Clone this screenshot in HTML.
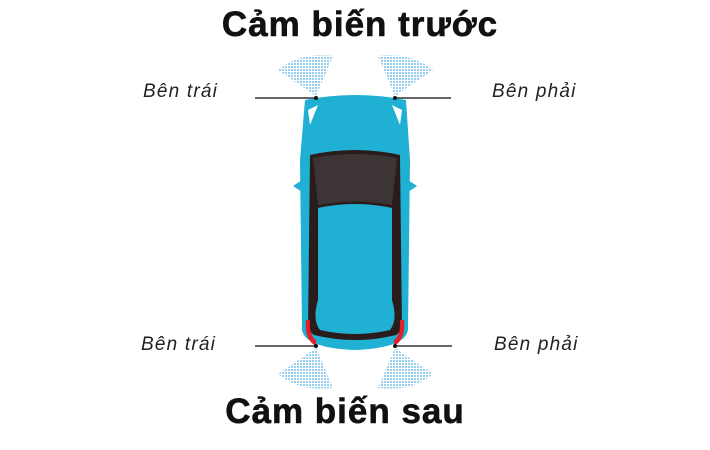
<!DOCTYPE html>
<html><head><style>
body{margin:0;width:710px;height:450px;background:#fff;position:relative;overflow:hidden;font-family:"Liberation Sans",sans-serif}
.t{position:absolute;left:0;width:710px;text-align:center;font-weight:bold;font-size:35px;letter-spacing:1px;color:#111;-webkit-text-stroke:0.6px #111}
.l{position:absolute;font-style:italic;font-size:19px;letter-spacing:1.2px;color:#222}
</style></head><body>
<div class="t" style="top:5px;left:5px">Cảm biến trước</div>
<div class="t" style="top:392px;left:-10px">Cảm biến sau</div>
<div class="l" style="left:143px;top:81px">Bên trái</div>
<div class="l" style="left:492px;top:81px">Bên phải</div>
<div class="l" style="left:141px;top:334px">Bên trái</div>
<div class="l" style="left:494px;top:334px">Bên phải</div>
<svg width="710" height="450" style="position:absolute;left:0;top:0">
<defs><pattern id="d" width="3" height="3" patternUnits="userSpaceOnUse"><rect width="2" height="2" fill="#7ec3ea"/></pattern></defs>
<path d="M316 96 L278 70 Q300 52 333 56 Z" fill="url(#d)" opacity=".8"/>
<path d="M395 96 L433 70 Q411 52 378 56 Z" fill="url(#d)" opacity=".8"/>
<path d="M316 348 L278 374 Q300 392 333 388 Z" fill="url(#d)" opacity=".8"/>
<path d="M395 348 L433 374 Q411 392 378 388 Z" fill="url(#d)" opacity=".8"/>
<g stroke="#333" stroke-width="1.5">
<line x1="255" y1="98" x2="316" y2="98"/><line x1="395" y1="98" x2="451" y2="98"/>
<line x1="255" y1="346" x2="316" y2="346"/><line x1="395" y1="346" x2="452" y2="346"/>
</g>
<path d="M305 100 Q355 90 406 100 L410 160 L408 330 Q405 348 355 350 Q305 348 302 330 L300 160 Z" fill="#1fb0d3"/>
<path d="M293 186 L302 180 L302 192 Z M417 186 L408 180 L408 192 Z" fill="#1fb0d3"/>
<path d="M310 155 Q355 145 400 155 L402 330 L396 335 Q355 345 314 335 L308 330 Z" fill="#2b1c1c"/>
<path d="M313 158 Q355 150 397 158 L392 205 Q355 198 318 205 Z" fill="#3d3535"/>
<path d="M318 208 Q355 200 392 208 L392 300 Q398 320 390 330 Q355 338 320 330 Q312 320 318 300 Z" fill="#1fb0d3"/>
<path d="M306 320 Q304 340 316 346 L316 340 Q309 335 310 320 Z M404 320 Q406 340 394 346 L394 340 Q401 335 400 320 Z" fill="#e0202a"/>
<path d="M308 110 L318 105 L310 125 Z M402 110 L392 105 L400 125 Z" fill="#fff"/>
<circle cx="316" cy="98" r="2" fill="#111"/><circle cx="395" cy="98" r="2" fill="#111"/>
<circle cx="316" cy="346" r="2" fill="#111"/><circle cx="395" cy="346" r="2" fill="#111"/>
</svg>
</body></html>
